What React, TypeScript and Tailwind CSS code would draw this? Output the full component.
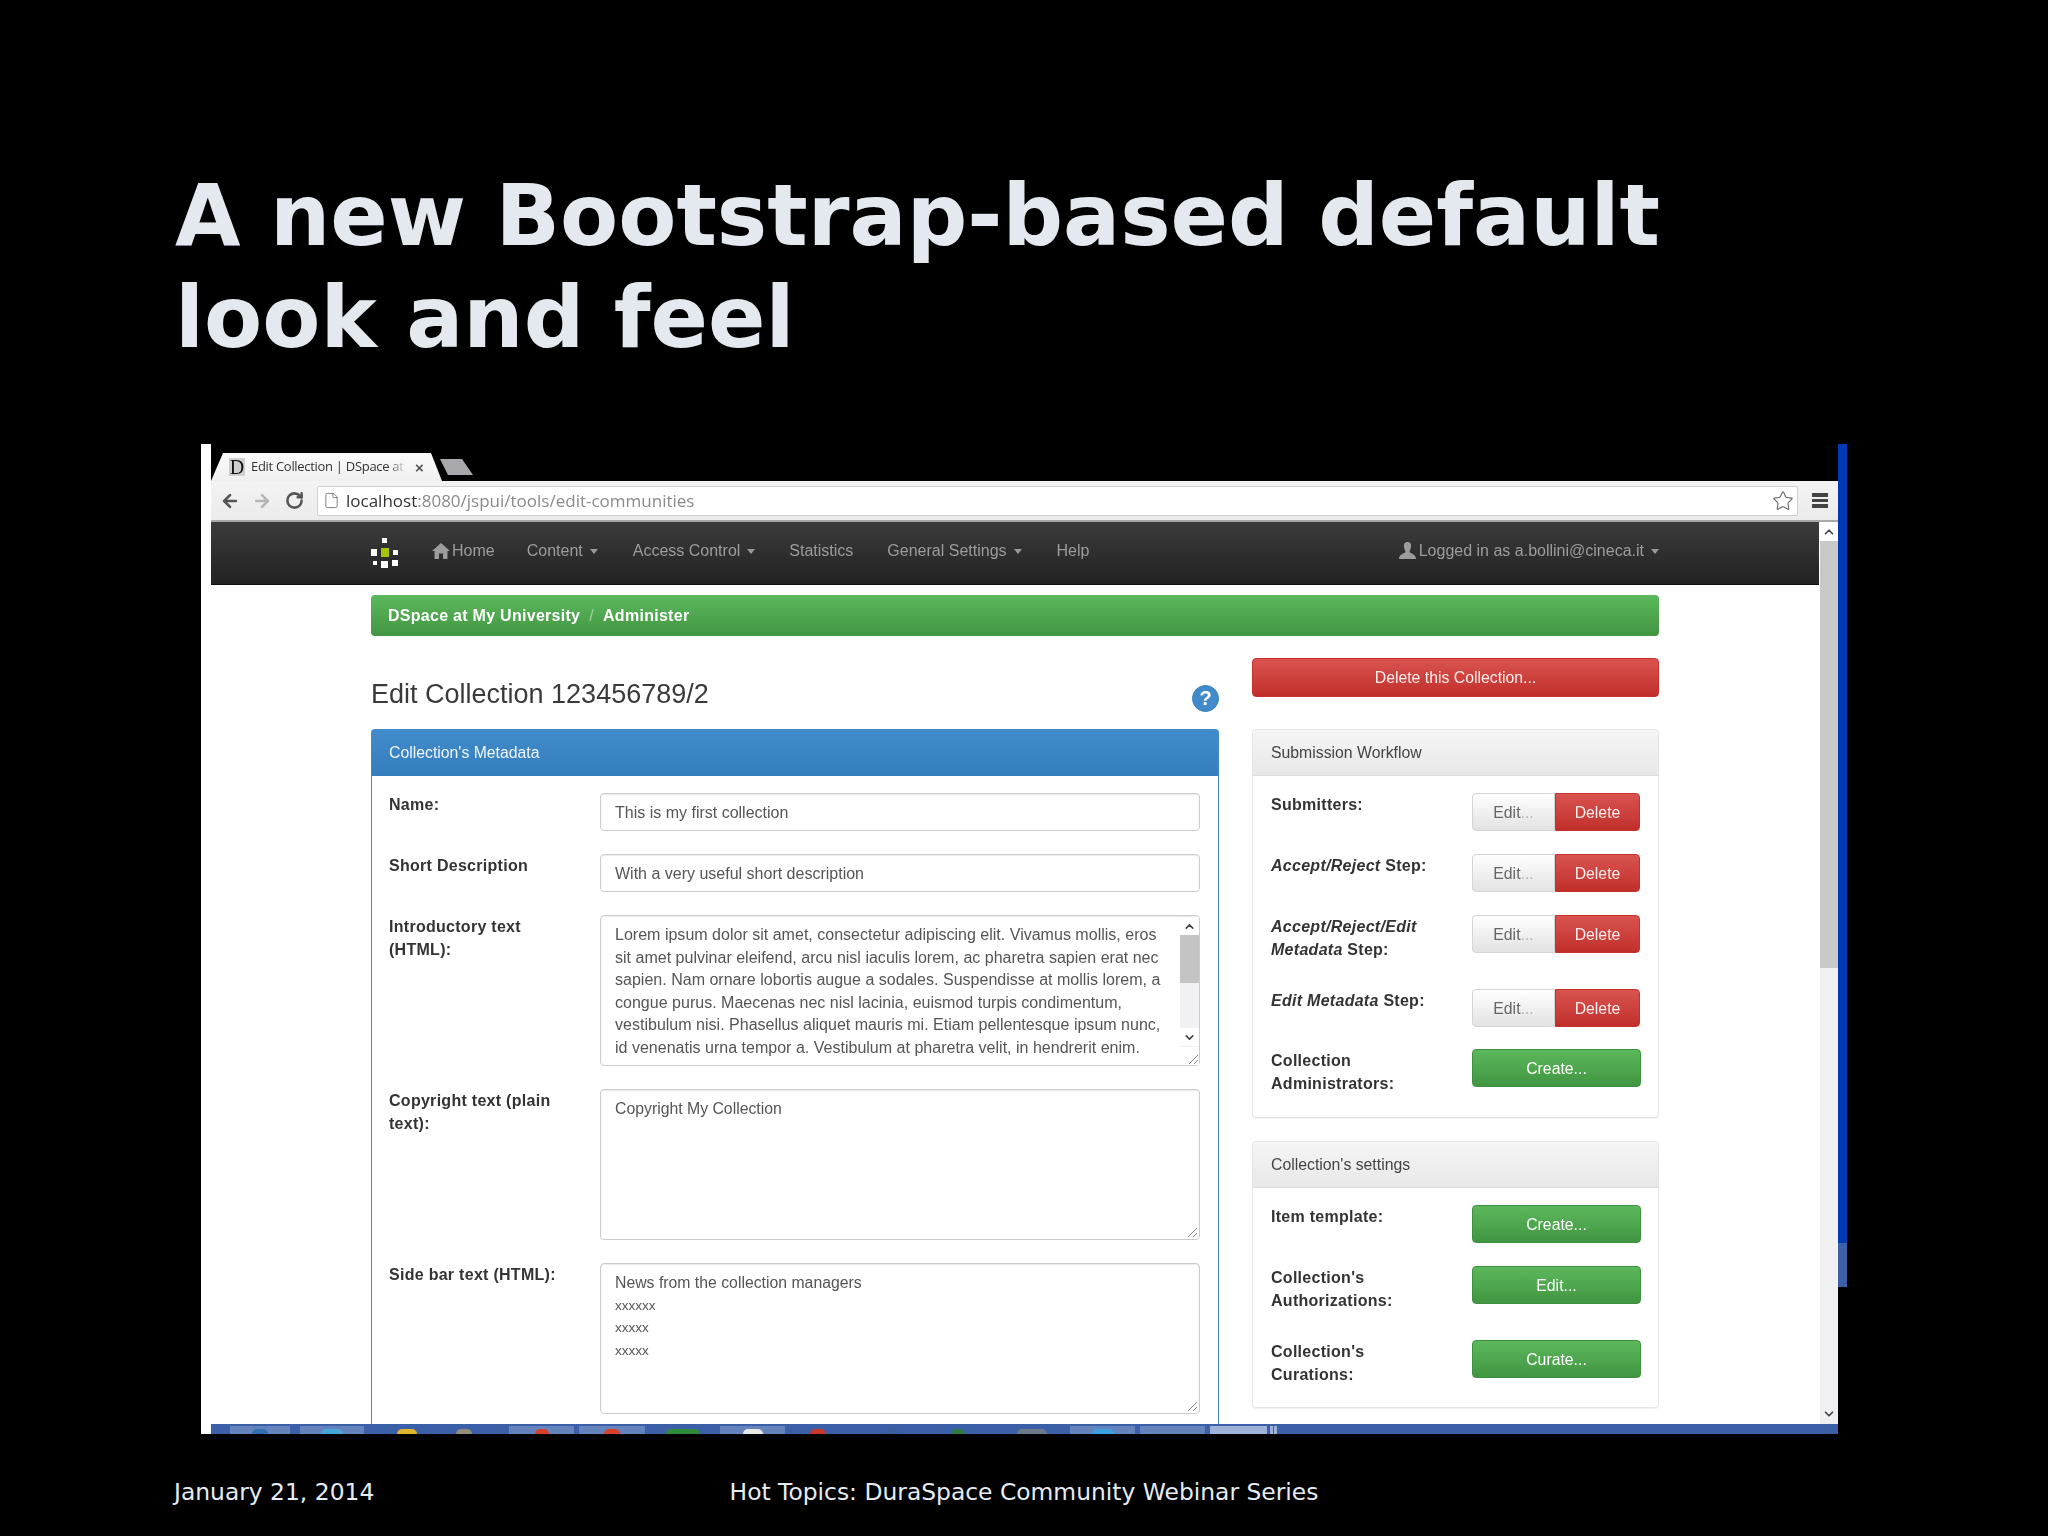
import { ArrowLeft, ArrowRight, RotateCw, Star, File, ChevronUp, ChevronDown } from "lucide-react";

const Caret = ({ className = "border-t-[#9a9a9a]" }: { className?: string }) => (
  <span className={`inline-block w-0 h-0 ml-[7px] align-middle border-x-[4.5px] border-x-transparent border-t-[5px] ${className}`} />
);

const Grip = () => (
  <svg width="11" height="11" viewBox="0 0 11 11" className="block" fill="none" stroke="#8a8a8a" strokeWidth="1">
    <path d="M1 10 L10 1 M6 10 L10 6" />
  </svg>
);

const NavItem = ({ label, caret, className = "" }: { label: string; caret?: boolean; className?: string }) => (
  <span className={`text-[16px] text-[#9c9c9c] whitespace-nowrap ${className}`}>
    {label}
    {caret && <Caret />}
  </span>
);

const GreenBtn = ({ label }: { label: string }) => (
  <div className="w-[169px] h-[38px] pt-[1px] flex items-center justify-center rounded-[4px] border border-[#3e8f3e] bg-gradient-to-b from-[#5cb85c] to-[#419641] text-white text-[15.8px]">
    {label}
  </div>
);

const EditDelete = () => (
  <div className="flex w-[168px] h-[38px] mr-[1px] text-[15.8px]">
    <div className="w-[83px] pt-[1px] flex items-center justify-center rounded-l-[4px] border border-[#d4d4d4] bg-gradient-to-b from-[#ffffff] to-[#e2e2e2] text-[#666]">
      Edit<span className="text-[#b5b5b5]">...</span>
    </div>
    <div className="flex-1 pt-[1px] flex items-center justify-center rounded-r-[4px] border border-[#c9302c] bg-gradient-to-b from-[#d9534f] to-[#c12e2a] text-[#ffeeee]">
      Delete
    </div>
  </div>
);

const Label = ({ children, className = "" }: { children: React.ReactNode; className?: string }) => (
  <div className={`pt-[1px] font-bold text-[16px] tracking-[0.28px] leading-[22.6px] text-[#333] ${className}`}>{children}</div>
);

const PanelGray = ({ title, className, children }: { title: string; className: string; children: React.ReactNode }) => (
  <div className={`rounded-[4px] border border-[#e4e4e4] shadow-[0_1px_1px_rgba(0,0,0,0.06)] ${className}`}>
    <div className="h-[46px] flex items-center pl-[18px] border-b border-[#dddddd] bg-gradient-to-b from-[#f5f5f5] to-[#e8e8e8] text-[15.8px] text-[#444] rounded-t-[4px]">
      {title}
    </div>
    {children}
  </div>
);

const Input = ({ text }: { text: string }) => (
  <div className="h-[38px] w-[600px] pt-[1px] flex items-center pl-[14px] rounded-[4px] border border-[#cccccc] shadow-[inset_0_1px_1px_rgba(0,0,0,0.08)] text-[16px] text-[#555]">
    {text}
  </div>
);

const Area = ({ lines, small }: { lines: string[]; small?: boolean }) => (
  <div className="relative h-[151px] w-[600px] pt-[8px] pl-[14px] rounded-[4px] border border-[#cccccc] shadow-[inset_0_1px_1px_rgba(0,0,0,0.08)] text-[15.8px] leading-[22.6px] text-[#555]">
    {lines.map((l, i) => (
      <div key={i} className={small && i > 0 ? "text-[13.5px]" : ""}>{l}</div>
    ))}
    <div className="absolute right-[1px] bottom-[1px]"><Grip /></div>
  </div>
);

const lorem = [
  "Lorem ipsum dolor sit amet, consectetur adipiscing elit. Vivamus mollis, eros",
  "sit amet pulvinar eleifend, arcu nisl iaculis lorem, ac pharetra sapien erat nec",
  "sapien. Nam ornare lobortis augue a sodales. Suspendisse at mollis lorem, a",
  "congue purus. Maecenas nec nisl lacinia, euismod turpis condimentum,",
  "vestibulum nisi. Phasellus aliquet mauris mi. Etiam pellentesque ipsum nunc,",
  "id venenatis urna tempor a. Vestibulum at pharetra velit, in hendrerit enim.",
];

const taskItems = [
  { cls: "w-[60px] ml-[19px] bg-[#6583bd]", dot: "w-[16px] bg-[#2f6fb0]" },
  { cls: "w-[64px] ml-[10px] bg-[#6583bd]", dot: "w-[22px] bg-[#46a6dc]" },
  { cls: "w-[40px] ml-[23px]", dot: "w-[20px] bg-[#e0b52c]" },
  { cls: "w-[40px] ml-[17px]", dot: "w-[16px] bg-[#8f8f7a]" },
  { cls: "w-[65px] ml-[25px] bg-[#6583bd]", dot: "w-[14px] bg-[#d8402a]" },
  { cls: "w-[66px] ml-[5px] bg-[#6583bd]", dot: "w-[16px] bg-[#d8402a]" },
  { cls: "w-[60px] ml-[8px]", dot: "w-[34px] bg-[#2f8a3a]" },
  { cls: "w-[65px] ml-[7px] bg-[#6583bd]", dot: "w-[20px] bg-[#e8e8e8]" },
  { cls: "w-[60px] ml-[3px]", dot: "w-[16px] bg-[#c9382a]" },
  { cls: "w-[50px] ml-[18px]", dot: "w-[14px] bg-[#3b5f9a]" },
  { cls: "w-[50px] ml-[17px]", dot: "w-[14px] bg-[#2f7a4a]" },
  { cls: "w-[50px] ml-[24px]", dot: "w-[30px] bg-[#6a7a8a]" },
  { cls: "w-[65px] ml-[13px] bg-[#6583bd]", dot: "w-[22px] bg-[#3aa0e0]" },
  { cls: "w-[65px] ml-[5px] bg-[#6583bd]", dot: "w-0" },
  { cls: "w-[57px] ml-[5px] bg-[#9fb3d8]", dot: "w-0" },
];

export default function App() {
  return (
    <div className="w-[2048px] h-[1536px] bg-black overflow-hidden font-['Liberation_Sans',Arial,sans-serif]">
      <h1 className="pt-[165px] pl-[175px] font-['DejaVu_Sans',Verdana,sans-serif] font-bold text-[84.7px] leading-[102px] text-[#e4e9f0] whitespace-nowrap">
        A new Bootstrap-based default
        <br />
        look and feel
      </h1>

      <div className="mt-[75px] ml-[201px] flex h-[990px] w-[1646px]">
        <div className="w-[10px] bg-white" />
        <div className="w-[1627px] flex flex-col blur-[0.35px]">
          {/* Tab strip */}
          <div className="h-[37px] bg-black flex items-end">
            <div className="w-[231px] h-[28px] flex items-center pl-[18px] bg-gradient-to-b from-[#fafafa] to-[#f0f0f0] [clip-path:polygon(0_100%,12px_0,220px_0,100%_100%)]">
              <span className="w-[16px] h-[18px] flex items-center justify-center bg-[#cfcfcf] text-[20px] leading-none font-['Liberation_Serif',serif] text-[#111]">D</span>
              <span className="ml-[6px] w-[156px] overflow-hidden whitespace-nowrap font-['Open_Sans',sans-serif] text-[13px] text-[#333] tracking-[-0.3px] [mask-image:linear-gradient(to_right,black_88%,transparent)]">Edit Collection | DSpace at</span>
              <span className="ml-[8px] text-[15px] leading-none font-bold text-[#555]">×</span>
            </div>
            <div className="-ml-[2px] mb-[6px] w-[33px] h-[16px] bg-[#a9a9ad] [clip-path:polygon(0_0,22px_0,100%_100%,8px_100%)]" />
          </div>
          {/* Toolbar */}
          <div className="h-[41px] flex items-center bg-gradient-to-b from-[#f3f3f3] to-[#ebebeb] border-b-2 border-[#a8a8a8]">
            <ArrowLeft size={20} strokeWidth={3.2} className="ml-[9px] text-[#555]" />
            <ArrowRight size={20} strokeWidth={3} className="ml-[12px] text-[#b5b5b5]" />
            <RotateCw size={19} strokeWidth={3.2} className="ml-[13px] text-[#555]" />
            <div className="ml-[13px] w-[1481px] h-[30px] flex items-center bg-white border border-[#cfcfcf] rounded-[2px]">
              <File size={17} strokeWidth={1.3} className="ml-[5px] text-[#777]" />
              <span className="ml-[6px] font-['Open_Sans',sans-serif] text-[17px] text-[#333]">
                localhost<span className="text-[#8a8a8a]">:8080/jspui/tools/edit-communities</span>
              </span>
              <Star size={22} strokeWidth={1.2} className="ml-auto mr-[3px] text-[#666]" />
            </div>
            <div className="ml-[14px] w-[16px] flex flex-col gap-[2px]">
              <span className="h-[3.5px] bg-[#444]" />
              <span className="h-[3.5px] bg-[#444]" />
              <span className="h-[3.5px] bg-[#444]" />
            </div>
          </div>
          {/* Below the toolbar */}
          <div className="h-[902px] flex bg-white">
            <div className="w-[1608px] flex flex-col">
              <nav className="h-[63px] pl-[160px] pb-[5px] flex items-center bg-gradient-to-b from-[#3c3c3c] to-[#222222] border-b border-[#111]">
                <svg width="28" height="30" viewBox="0 0 28 30" className="shrink-0 mt-[4px]">
                  <rect x="11" y="0" width="5" height="5" fill="#fff" />
                  <rect x="0" y="11" width="6" height="7" fill="#fff" />
                  <rect x="10" y="10" width="8" height="9" fill="#a8c400" />
                  <rect x="22" y="12" width="5" height="5" fill="#fff" />
                  <rect x="2" y="23" width="4" height="4" fill="#fff" />
                  <rect x="10" y="23" width="7" height="7" fill="#fff" />
                  <rect x="21" y="22" width="6" height="6" fill="#fff" />
                </svg>
                <svg width="18" height="16" viewBox="0 0 18 16" className="ml-[33px] shrink-0">
                  <path d="M9 0 L18 8 L15.5 8 L15.5 16 L11 16 L11 10.5 L7 10.5 L7 16 L2.5 16 L2.5 8 L0 8 Z" fill="#9c9c9c" />
                </svg>
                <NavItem label="Home" className="ml-[2px]" />
                <NavItem label="Content" caret className="ml-[32px]" />
                <NavItem label="Access Control" caret className="ml-[35px]" />
                <NavItem label="Statistics" className="ml-[34px]" />
                <NavItem label="General Settings" caret className="ml-[34px]" />
                <NavItem label="Help" className="ml-[35px]" />
                <svg width="17" height="17" viewBox="0 0 17 17" className="ml-auto shrink-0">
                  <path d="M8.5 0 C11.5 0 12.5 2.5 12 5 C11.7 7 10.8 8.5 10.5 10 C11.5 11.5 17 12 17 17 L0 17 C0 12 5.5 11.5 6.5 10 C6.2 8.5 5.3 7 5 5 C4.5 2.5 5.5 0 8.5 0 Z" fill="#9c9c9c" />
                </svg>
                <NavItem label="Logged in as a.bollini@cineca.it" caret className="ml-[3px] mr-[160px]" />
              </nav>

              <main className="h-[839px] px-[160px] overflow-hidden">
                <div className="mt-[10px] h-[41px] flex items-center pl-[17px] rounded-[4px] bg-gradient-to-b from-[#5cb85c] to-[#419641] text-[16px] tracking-[0.28px] font-bold text-white">
                  DSpace at My University
                  <span className="mx-[9px] font-normal text-[#a3d3a3]">/</span>
                  Administer
                </div>

                <div className="mt-[22px] flex gap-[33px]">
                  {/* Left column */}
                  <div className="w-[848px]">
                    <div className="h-[71px] flex items-center justify-between pb-[6px] pt-[10px]">
                      <div className="text-[27px] text-[#3a3a3a] mt-[-3px]">Edit Collection 123456789/2</div>
                      <div className="w-[27px] h-[27px] mt-[5px] rounded-full bg-[#428bca] flex items-center justify-center text-white font-bold text-[20px] border border-[#3a80bb]">?</div>
                    </div>
                    <div className="rounded-t-[4px] border-x border-t border-[#428bca]">
                      <div className="h-[46px] flex items-center pl-[17px] bg-gradient-to-b from-[#428bca] to-[#357ebd] text-[#f0f6fc] text-[15.8px] font-normal">
                        Collection's Metadata
                      </div>
                      <div className="pt-[17px] pl-[17px] pb-[60px] flex flex-col gap-[23px]">
                        <div className="flex">
                          <Label className="w-[211px]">Name:</Label>
                          <Input text="This is my first collection" />
                        </div>
                        <div className="flex">
                          <Label className="w-[211px]">Short Description</Label>
                          <Input text="With a very useful short description" />
                        </div>
                        <div className="flex">
                          <Label className="w-[211px] pr-[30px]">Introductory text (HTML):</Label>
                          <div className="relative h-[151px] w-[600px] pt-[7px] pl-[14px] rounded-[4px] border border-[#cccccc] shadow-[inset_0_1px_1px_rgba(0,0,0,0.08)] text-[16.05px] leading-[22.6px] text-[#555] whitespace-nowrap">
                            {lorem.map((l, i) => (
                              <div key={i}>{l}</div>
                            ))}
                            <div className="absolute top-[1px] right-0 bottom-0 w-[19px] flex flex-col bg-[#f1f0f2]">
                              <div className="h-[18px] flex items-center justify-center bg-white">
                                <ChevronUp size={13} strokeWidth={3} className="text-[#444]" />
                              </div>
                              <div className="h-[48px] bg-[#c4c4c4]" />
                              <div className="flex-1" />
                              <div className="h-[18px] mb-[1px] flex items-center justify-center bg-white">
                                <ChevronDown size={13} strokeWidth={3} className="text-[#444]" />
                              </div>
                              <div className="h-[18px] flex items-end justify-end bg-white"><Grip /></div>
                            </div>
                          </div>
                        </div>
                        <div className="flex">
                          <Label className="w-[211px] pr-[30px]">Copyright text (plain text):</Label>
                          <Area lines={["Copyright My Collection"]} />
                        </div>
                        <div className="flex">
                          <Label className="w-[211px]">Side bar text (HTML):</Label>
                          <Area small lines={["News from the collection managers", "xxxxxx", "xxxxx", "xxxxx"]} />
                        </div>
                      </div>
                    </div>
                  </div>

                  {/* Right column */}
                  <div className="w-[407px]">
                    <div className="h-[39px] flex items-center justify-center rounded-[4px] border border-[#c9302c] bg-gradient-to-b from-[#d9534f] to-[#c12e2a] text-[#ffeeee] text-[15.8px]">
                      Delete this Collection...
                    </div>
                    <PanelGray title="Submission Workflow" className="mt-[32px] h-[389px]">
                      <div className="pt-[17px] pl-[18px] pr-[17px]">
                        <div className="h-[61px] flex justify-between">
                          <Label>Submitters:</Label>
                          <EditDelete />
                        </div>
                        <div className="h-[61px] flex justify-between">
                          <Label><i>Accept/Reject</i> Step:</Label>
                          <EditDelete />
                        </div>
                        <div className="h-[74px] flex justify-between">
                          <Label><i>Accept/Reject/Edit<br />Metadata</i> Step:</Label>
                          <EditDelete />
                        </div>
                        <div className="h-[60px] flex justify-between">
                          <Label><i>Edit Metadata</i> Step:</Label>
                          <EditDelete />
                        </div>
                        <div className="flex justify-between">
                          <Label>Collection<br />Administrators:</Label>
                          <GreenBtn label="Create..." />
                        </div>
                      </div>
                    </PanelGray>
                    <PanelGray title="Collection's settings" className="mt-[23px] h-[267px]">
                      <div className="pt-[17px] pl-[18px] pr-[17px]">
                        <div className="h-[61px] flex justify-between">
                          <Label>Item template:</Label>
                          <GreenBtn label="Create..." />
                        </div>
                        <div className="h-[74px] flex justify-between">
                          <Label>Collection's<br />Authorizations:</Label>
                          <GreenBtn label="Edit..." />
                        </div>
                        <div className="flex justify-between">
                          <Label>Collection's<br />Curations:</Label>
                          <GreenBtn label="Curate..." />
                        </div>
                      </div>
                    </PanelGray>
                  </div>
                </div>
              </main>
            </div>
            {/* Page scrollbar */}
            <div className="ml-[1px] w-[18px] flex flex-col bg-[#f0eff2]">
              <div className="h-[19px] flex items-center justify-center bg-white">
                <ChevronUp size={14} strokeWidth={3} className="text-[#444]" />
              </div>
              <div className="h-[427px] bg-[#c8c8c8]" />
              <div className="flex-1" />
              <div className="h-[20px] flex items-center justify-center">
                <ChevronDown size={14} strokeWidth={3} className="text-[#444]" />
              </div>
            </div>
          </div>
          {/* Taskbar */}
          <div className="h-[10px] flex items-end bg-[#3b60a8] overflow-hidden">
            {taskItems.map((t, i) => (
              <div key={i} className={`h-[8px] flex justify-center items-end ${t.cls}`}>
                <span className={`h-[5px] rounded-t-full ${t.dot}`} />
              </div>
            ))}
            <div className="ml-[3px] h-[8px] w-[3px] bg-[#9fb3d8]" />
            <div className="ml-[1px] h-[8px] w-[3px] bg-[#9fb3d8]" />
          </div>
        </div>
        {/* Right edge of the desktop */}
        <div className="w-[9px] flex flex-col">
          <div className="h-[799px] bg-[#0039b4]" />
          <div className="h-[44px] bg-[#3b60a8]" />
        </div>
      </div>

      <footer className="mt-[42px] grid grid-cols-[1fr_auto_1fr] font-['DejaVu_Sans',Verdana,sans-serif] text-[23.4px] leading-[32px] text-[#e6ecf4]">
        <div className="pl-[174px]">January 21, 2014</div>
        <div>Hot Topics: DuraSpace Community Webinar Series</div>
        <div />
      </footer>
    </div>
  );
}
